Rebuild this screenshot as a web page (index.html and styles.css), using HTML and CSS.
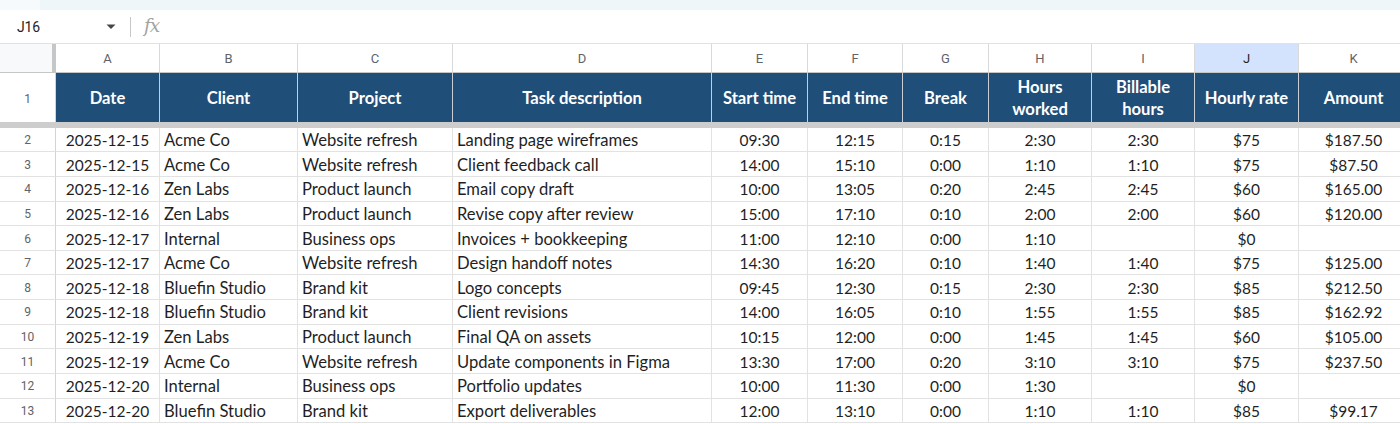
FILE: index.html
```html
<!DOCTYPE html>
<html lang="en">
<head>
<meta charset="utf-8">
<title>Time log</title>
<link rel="stylesheet" href="styles.css">
</head>
<body>
<div class="app">
  <div class="topband"><div class="topband-left"></div><div class="topband-right"></div></div>
  <div class="formula-bar">
    <div class="namebox">
      <span class="cellref">J16</span>
      <svg class="caret" width="10" height="6" viewBox="0 0 10 6"><path d="M0.5 0.5 L9.5 0.5 L5 5 Z" fill="#444746"/></svg>
    </div>
    <div class="fb-sep"></div>
    <span class="fx">fx</span>
  </div>
  <div class="sheet">
    <div class="row colhead">
      <div class="corner"></div>
      <div class="ch">A</div><div class="ch">B</div><div class="ch">C</div><div class="ch">D</div><div class="ch">E</div><div class="ch">F</div><div class="ch">G</div><div class="ch">H</div><div class="ch">I</div><div class="ch sel">J</div><div class="ch">K</div>
    </div>
    <div class="row hdr">
      <div class="rh">1</div>
      <div class="hc">Date</div><div class="hc">Client</div><div class="hc">Project</div><div class="hc">Task description</div><div class="hc">Start time</div><div class="hc">End time</div><div class="hc">Break</div><div class="hc">Hours<br>worked</div><div class="hc">Billable<br>hours</div><div class="hc">Hourly rate</div><div class="hc">Amount</div>
    </div>
    <div class="freeze"></div>
    <div class="row data"><div class="rh">2</div><div class="c">2025-12-15</div><div class="l">Acme Co</div><div class="l">Website refresh</div><div class="l">Landing page wireframes</div><div class="c">09:30</div><div class="c">12:15</div><div class="c">0:15</div><div class="c">2:30</div><div class="c">2:30</div><div class="c">$75</div><div class="c">$187.50</div></div>
    <div class="row data"><div class="rh">3</div><div class="c">2025-12-15</div><div class="l">Acme Co</div><div class="l">Website refresh</div><div class="l">Client feedback call</div><div class="c">14:00</div><div class="c">15:10</div><div class="c">0:00</div><div class="c">1:10</div><div class="c">1:10</div><div class="c">$75</div><div class="c">$87.50</div></div>
    <div class="row data"><div class="rh">4</div><div class="c">2025-12-16</div><div class="l">Zen Labs</div><div class="l">Product launch</div><div class="l">Email copy draft</div><div class="c">10:00</div><div class="c">13:05</div><div class="c">0:20</div><div class="c">2:45</div><div class="c">2:45</div><div class="c">$60</div><div class="c">$165.00</div></div>
    <div class="row data"><div class="rh">5</div><div class="c">2025-12-16</div><div class="l">Zen Labs</div><div class="l">Product launch</div><div class="l">Revise copy after review</div><div class="c">15:00</div><div class="c">17:10</div><div class="c">0:10</div><div class="c">2:00</div><div class="c">2:00</div><div class="c">$60</div><div class="c">$120.00</div></div>
    <div class="row data"><div class="rh">6</div><div class="c">2025-12-17</div><div class="l">Internal</div><div class="l">Business ops</div><div class="l">Invoices + bookkeeping</div><div class="c">11:00</div><div class="c">12:10</div><div class="c">0:00</div><div class="c">1:10</div><div class="c"></div><div class="c">$0</div><div class="c"></div></div>
    <div class="row data"><div class="rh">7</div><div class="c">2025-12-17</div><div class="l">Acme Co</div><div class="l">Website refresh</div><div class="l">Design handoff notes</div><div class="c">14:30</div><div class="c">16:20</div><div class="c">0:10</div><div class="c">1:40</div><div class="c">1:40</div><div class="c">$75</div><div class="c">$125.00</div></div>
    <div class="row data"><div class="rh">8</div><div class="c">2025-12-18</div><div class="l">Bluefin Studio</div><div class="l">Brand kit</div><div class="l">Logo concepts</div><div class="c">09:45</div><div class="c">12:30</div><div class="c">0:15</div><div class="c">2:30</div><div class="c">2:30</div><div class="c">$85</div><div class="c">$212.50</div></div>
    <div class="row data"><div class="rh">9</div><div class="c">2025-12-18</div><div class="l">Bluefin Studio</div><div class="l">Brand kit</div><div class="l">Client revisions</div><div class="c">14:00</div><div class="c">16:05</div><div class="c">0:10</div><div class="c">1:55</div><div class="c">1:55</div><div class="c">$85</div><div class="c">$162.92</div></div>
    <div class="row data"><div class="rh">10</div><div class="c">2025-12-19</div><div class="l">Zen Labs</div><div class="l">Product launch</div><div class="l">Final QA on assets</div><div class="c">10:15</div><div class="c">12:00</div><div class="c">0:00</div><div class="c">1:45</div><div class="c">1:45</div><div class="c">$60</div><div class="c">$105.00</div></div>
    <div class="row data"><div class="rh">11</div><div class="c">2025-12-19</div><div class="l">Acme Co</div><div class="l">Website refresh</div><div class="l">Update components in Figma</div><div class="c">13:30</div><div class="c">17:00</div><div class="c">0:20</div><div class="c">3:10</div><div class="c">3:10</div><div class="c">$75</div><div class="c">$237.50</div></div>
    <div class="row data"><div class="rh">12</div><div class="c">2025-12-20</div><div class="l">Internal</div><div class="l">Business ops</div><div class="l">Portfolio updates</div><div class="c">10:00</div><div class="c">11:30</div><div class="c">0:00</div><div class="c">1:30</div><div class="c"></div><div class="c">$0</div><div class="c"></div></div>
    <div class="row data"><div class="rh">13</div><div class="c">2025-12-20</div><div class="l">Bluefin Studio</div><div class="l">Brand kit</div><div class="l">Export deliverables</div><div class="c">12:00</div><div class="c">13:10</div><div class="c">0:00</div><div class="c">1:10</div><div class="c">1:10</div><div class="c">$85</div><div class="c">$99.17</div></div>
  </div>
</div>
</body>
</html>
```

FILE: styles.css
```css
* { box-sizing: border-box; }
html, body { margin: 0; padding: 0; background: #ffffff; }
body { width: 1400px; height: 424px; overflow: hidden; font-family: Roboto, "Liberation Sans", Arial, sans-serif; }
.app { width: 1400px; }

.topband { height: 10px; display: flex; }
.topband-left { width: 40px; background: #f7fafc; }
.topband-right { flex: 1; background: #eff6fa; }

.formula-bar { height: 34px; display: flex; align-items: center; border-bottom: 1px solid #e1e3e1; background: #fff; }
.namebox { width: 124px; display: flex; align-items: center; justify-content: space-between; padding: 0 8px 0 17px; }
.cellref { font-size: 14px; color: #1f1f1f; letter-spacing: -0.2px; }
.caret { display: block; }
.fb-sep { width: 1px; height: 20px; background: #c7c7c7; margin: 0 13px 0 6px; }
.fx { font-family: "DejaVu Serif", "Liberation Serif", serif; font-style: italic; font-size: 18.5px; color: #a3a3a3; letter-spacing: -1.2px; margin-top: -2px; }

.sheet { width: 1400px; overflow: hidden; }
.row { display: grid; grid-template-columns: 56px 104px 138px 155px 259px 96px 95px 86px 103px 103px 104px 110px; width: 1409px; }
.row > div { border-right: 1px solid #e2e2e2; border-bottom: 1px solid #e2e2e2; overflow: hidden; white-space: nowrap; }

.colhead { height: 29px; }
.colhead > div { display: flex; align-items: center; justify-content: center; font-size: 13px; color: #5f6368; background: #fff; border-bottom-color: #c4c7c5; border-right-color: #d9d9d9; }
.colhead > .corner { background: #f8f9fa; border-right: 4px solid #c4c7c5; border-bottom: 1px solid #c4c7c5; }
.colhead > .sel { background: #d3e3fd; color: #1f1f1f; }

.rh { display: flex; align-items: center; justify-content: center; font-size: 12px; color: #5f6368; background: #fff; border-right-color: #d4d4d4 !important; }

.hdr { height: 49px; }
.hdr > .hc { background: #1f4e79; color: #ffffff; font-family: Lato, "Open Sans", sans-serif; font-weight: 700; font-size: 16.6px; line-height: 21.7px; display: flex; align-items: center; justify-content: center; text-align: center; border-right-color: #c9ced4; border-bottom: none; padding-top: 3px; }
.hdr > .rh { border-bottom: none; padding-top: 2px; }

.freeze { height: 5.7px; background: #cdcdcd; }

.data { height: 24.64px; }
.data > div { font-family: Lato, "Open Sans", sans-serif; font-size: 15.5px; color: #1f1f1f; display: flex; align-items: center; padding-top: 1px; }
.data > .c { justify-content: center; }
.data > .l { justify-content: flex-start; padding-left: 4px; font-size: 16.6px; }
.data > .rh { font-family: Roboto, "Liberation Sans", Arial, sans-serif; font-size: 12px; color: #5f6368; justify-content: center; }
```
